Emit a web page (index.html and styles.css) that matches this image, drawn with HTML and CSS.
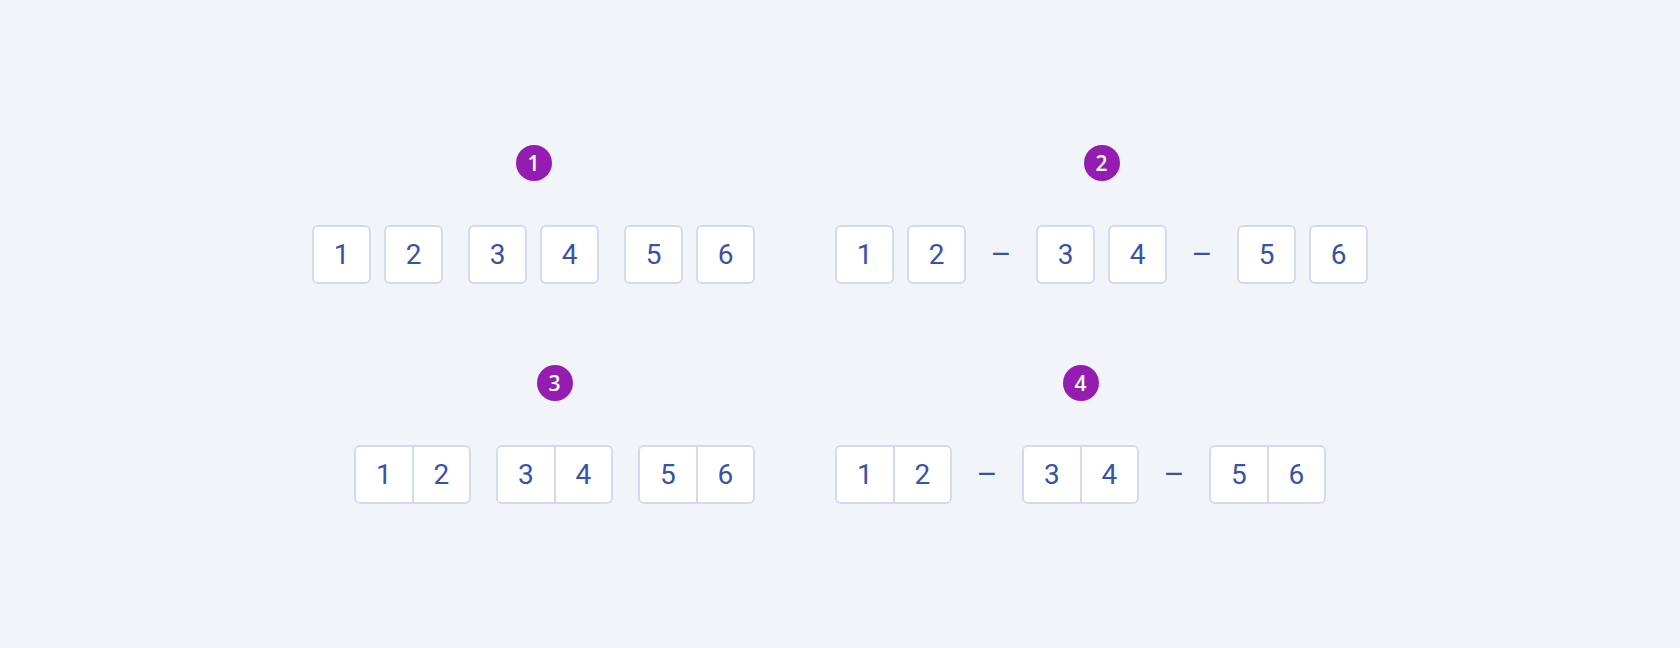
FILE: index.html
```html
<!DOCTYPE html>
<html lang="en">
<head>
  <meta charset="UTF-8" />
  <meta name="viewport" content="width=device-width, initial-scale=1" />
  <title>Code input variants</title>
  <link rel="stylesheet" href="styles.css">
</head>
<body>
  <div class="board">

    <!-- 1 : separate boxes, spaced groups -->
    <div class="variant left">
      <span class="badge">1</span>
      <div class="row">
        <div class="pair"><span class="box">1</span><span class="box">2</span></div>
        <div class="pair"><span class="box">3</span><span class="box">4</span></div>
        <div class="pair"><span class="box">5</span><span class="box">6</span></div>
      </div>
    </div>

    <!-- 2 : separate boxes, dash between groups -->
    <div class="variant right">
      <span class="badge">2</span>
      <div class="row dashed">
        <div class="pair"><span class="box">1</span><span class="box">2</span></div>
        <span class="dash">–</span>
        <div class="pair"><span class="box">3</span><span class="box">4</span></div>
        <span class="dash">–</span>
        <div class="pair"><span class="box">5</span><span class="box">6</span></div>
      </div>
    </div>

    <!-- 3 : joined boxes, spaced groups -->
    <div class="variant left">
      <span class="badge">3</span>
      <div class="row">
        <div class="joined"><span class="cell">1</span><span class="cell">2</span></div>
        <div class="joined"><span class="cell">3</span><span class="cell">4</span></div>
        <div class="joined"><span class="cell">5</span><span class="cell">6</span></div>
      </div>
    </div>

    <!-- 4 : joined boxes, dash between groups -->
    <div class="variant right">
      <span class="badge">4</span>
      <div class="row dashed">
        <div class="joined"><span class="cell">1</span><span class="cell">2</span></div>
        <span class="dash">–</span>
        <div class="joined"><span class="cell">3</span><span class="cell">4</span></div>
        <span class="dash">–</span>
        <div class="joined"><span class="cell">5</span><span class="cell">6</span></div>
      </div>
    </div>

  </div>
</body>
</html>
```

FILE: styles.css
```css
html,
body {
  margin: 0;
  height: 100%;
}

body {
  background-color: #f1f4f9;
  font-family: Roboto, "Liberation Sans", sans-serif;
  display: flex;
  align-items: center;
  justify-content: center;
}

.board {
  display: grid;
  grid-template-columns: max-content max-content;
  column-gap: 80px;
  row-gap: 81px;
}

.variant {
  display: flex;
  flex-direction: column;
  align-items: center;
  gap: 44px;
}

.variant.left {
  justify-self: end;
}

.variant.right {
  justify-self: start;
}

.badge {
  width: 36px;
  height: 36px;
  border-radius: 50%;
  background-color: #951cb0;
  color: #fff;
  font-family: "Open Sans", "Noto Sans", sans-serif;
  font-weight: 600;
  font-size: 21px;
  line-height: 36px;
  text-align: center;
}

.row {
  display: flex;
  align-items: center;
  gap: 25px;
}

.row.dashed {
  gap: 0;
}

.pair {
  display: flex;
  gap: 13px;
}

.box,
.cell {
  display: flex;
  align-items: center;
  justify-content: center;
  height: 59px;
  box-sizing: border-box;
  background-color: #fff;
  color: #3853a6;
  font-size: 28px;
}

.box {
  width: 59px;
  border: 2px solid #d3daee;
  border-radius: 6px;
}

.joined {
  display: flex;
  width: 117px;
  height: 59px;
  box-sizing: border-box;
  border: 2px solid #d3daee;
  border-radius: 6px;
  overflow: hidden;
}

.cell {
  flex: 1;
  height: 100%;
}

.cell + .cell {
  border-left: 2px solid #d3daee;
}

.dash {
  width: 70px;
  text-align: center;
  color: #3853a6;
  font-size: 32px;
  line-height: 59px;
}
```
